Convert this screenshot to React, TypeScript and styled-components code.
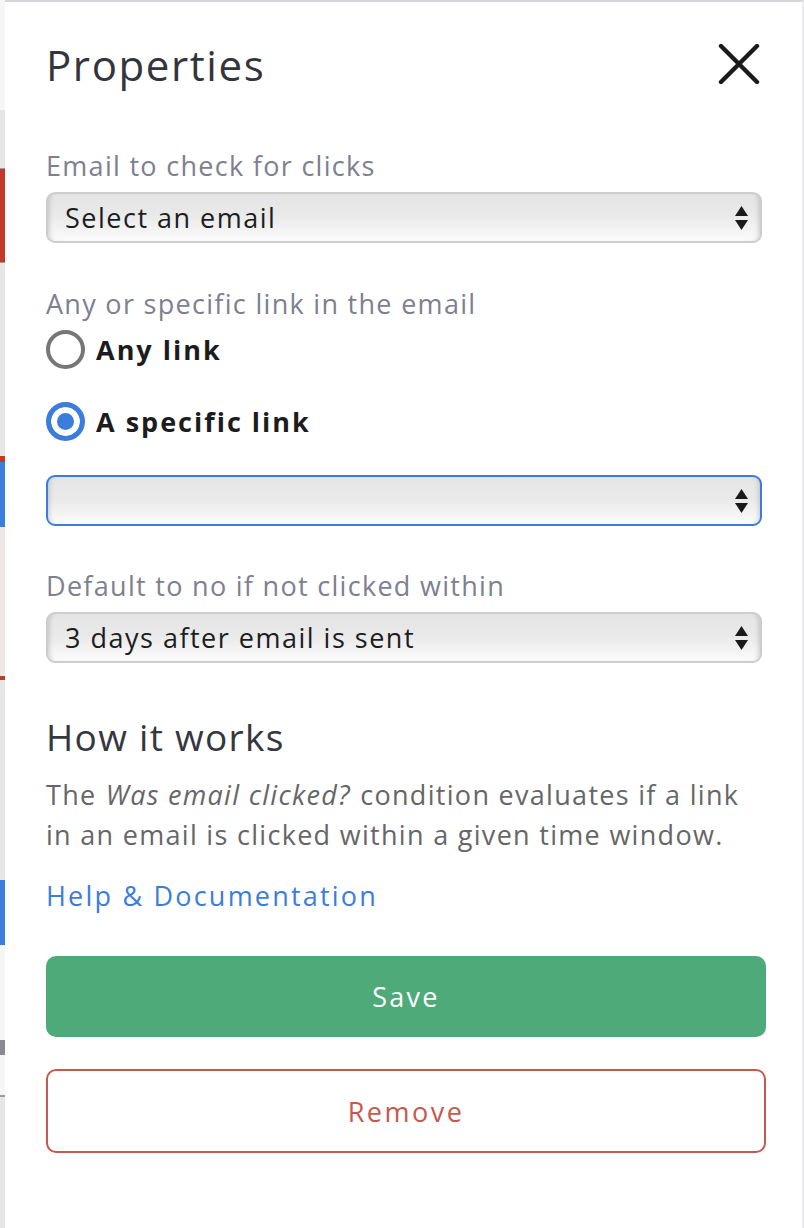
import React from 'react';
import { styled, createGlobalStyle } from 'styled-components';

const FONT = '"Open Sans", "Noto Sans", "Liberation Sans", sans-serif';

// the canvas that peeks out behind the panel on the left
const backdrop: { h: number; color: string }[] = [
  { h: 110, color: '#f6f6f8' },
  { h: 58, color: '#e6e6e9' },
  { h: 1, color: '#9c9c9c' },
  { h: 93, color: '#c0392b' },
  { h: 1, color: '#9c9c9c' },
  { h: 193, color: '#e6e6e9' },
  { h: 6, color: '#c0392b' },
  { h: 65, color: '#3b7ddd' },
  { h: 149, color: '#efe6e6' },
  { h: 4, color: '#c0392b' },
  { h: 200, color: '#e6e6e9' },
  { h: 65, color: '#3b7ddd' },
  { h: 95, color: '#f6f6f8' },
  { h: 15, color: '#8a8a90' },
  { h: 40, color: '#f6f6f8' },
  { h: 2, color: '#9c9c9c' },
  { h: 140, color: '#e6e6e9' },
];

const GlobalStyle = createGlobalStyle`
  * { box-sizing: border-box; }
  html, body { margin: 0; padding: 0; background: #ffffff; }
  body { font-family: ${FONT}; }
`;

export default function App() {
  return (
    <>
      <GlobalStyle />
      <Page>
        <Backdrop>
          {backdrop.map((b, i) => (
            <Strip key={i} style={{ height: b.h, background: b.color }} />
          ))}
        </Backdrop>
        <Panel>
          <Header>
            <Title>Properties</Title>
            <CloseButton aria-label="Close">
              <svg width="42" height="40" viewBox="0 0 42 40">
                <path d="M3 2 L39 38 M39 2 L3 38" stroke="#1b1b1d" strokeWidth="4.4" strokeLinecap="round" />
              </svg>
            </CloseButton>
          </Header>

          <Label top={54}>Email to check for clicks</Label>
          <SelectBox>
            <Select defaultValue="">
              <option value="">Select an email</option>
            </Select>
            <Arrows />
          </SelectBox>

          <Label top={43}>Any or specific link in the email</Label>
          <Radios>
            <RadioRow>
              <RadioInput type="radio" name="link" />
              <RadioText>Any link</RadioText>
            </RadioRow>
            <RadioRow>
              <RadioInput type="radio" name="link" defaultChecked />
              <RadioText>A specific link</RadioText>
            </RadioRow>
          </Radios>
          <SelectBox top={32}>
            <Select defaultValue="" focused>
              <option value=""></option>
            </Select>
            <Arrows />
          </SelectBox>

          <Label top={42}>Default to no if not clicked within</Label>
          <SelectBox>
            <Select defaultValue="3">
              <option value="3">3 days after email is sent</option>
            </Select>
            <Arrows />
          </SelectBox>

          <Heading>How it works</Heading>
          <Text>
            The <em>Was email clicked?</em> condition evaluates if a link in an email is clicked
            within a given time window.
          </Text>
          <HelpLink href="#">Help &amp; Documentation</HelpLink>

          <SaveButton>Save</SaveButton>
          <RemoveButton>Remove</RemoveButton>
        </Panel>
      </Page>
    </>
  );
}

function Arrows() {
  return (
    <ArrowIcon width="13" height="24" viewBox="0 0 13 24">
      <path d="M6.5 0 L13 10 L0 10 Z" fill="#1a1a1a" />
      <path d="M0 14 L13 14 L6.5 24 Z" fill="#1a1a1a" />
    </ArrowIcon>
  );
}

const Page = styled.div`
  display: flex;
  width: 804px;
  min-height: 1228px;
`;

const Backdrop = styled.div`
  width: 5px;
  display: flex;
  flex-direction: column;
`;

const Strip = styled.div`
  width: 100%;
`;

const Panel = styled.div`
  flex: 1;
  display: flex;
  flex-direction: column;
  padding: 32px 36px 0 41px;
  background: #ffffff;
  border-top: 2px solid #d6d6da;
  border-right: 2px solid #ececef;
`;

const Header = styled.div`
  display: flex;
  align-items: center;
  justify-content: space-between;
  height: 60px;
`;

const Title = styled.h1`
  margin: 0;
  font-size: 42px;
  font-weight: 500;
  letter-spacing: 1.6px;
  color: #33353d;
`;

const CloseButton = styled.button`
  display: flex;
  padding: 0;
  margin-right: 6px;
  border: none;
  background: none;
  cursor: pointer;
`;

const Label = styled.div<{ top: number }>`
  margin-top: ${p => p.top}px;
  font-size: 27px;
  line-height: 36px;
  letter-spacing: 1.3px;
  color: #7e8090;
`;

const SelectBox = styled.div<{ top?: number }>`
  position: relative;
  margin-top: ${p => p.top ?? 8}px;
  width: calc(100% - 4px);
`;

const Select = styled.select<{ focused?: boolean }>`
  appearance: none;
  display: block;
  width: 100%;
  height: 51px;
  padding: 0 44px 0 17px;
  font-family: ${FONT};
  font-size: 27px;
  letter-spacing: 1.5px;
  color: #1d1d1f;
  border: ${p => (p.focused ? '2px solid #3b7ddd' : '2px solid #cdcdcf')};
  border-radius: 9px;
  background: linear-gradient(to bottom, #e5e5e5 0%, #e9e9e9 45%, #fbfbfb 100%);
  box-shadow:
    inset 5px 0 5px -4px rgba(0, 0, 0, 0.18),
    inset -5px 0 5px -4px rgba(0, 0, 0, 0.18);
  outline: none;
`;

const ArrowIcon = styled.svg`
  position: absolute;
  right: 14px;
  top: 50%;
  transform: translateY(-50%);
  pointer-events: none;
`;

const Radios = styled.div`
  display: flex;
  flex-direction: column;
  gap: 28px;
  margin-top: 5px;
`;

const RadioRow = styled.label`
  display: flex;
  align-items: center;
  gap: 11px;
  height: 44px;
  cursor: pointer;
`;

const RadioInput = styled.input`
  appearance: none;
  margin: 0;
  width: 39px;
  height: 39px;
  border-radius: 50%;
  border: 4px solid #767676;
  background: #ffffff;

  &:checked {
    border: 5px solid #3b7ddd;
    background: #3b7ddd;
    box-shadow: inset 0 0 0 6px #ffffff;
  }
`;

const RadioText = styled.span`
  font-size: 27px;
  font-weight: 700;
  letter-spacing: 2px;
  color: #1c1c1e;
`;

const Heading = styled.h2`
  margin: 52px 0 0;
  font-size: 37px;
  line-height: 44px;
  font-weight: 500;
  letter-spacing: 1.3px;
  color: #35373f;
`;

const Text = styled.p`
  margin: 16px 0 0;
  font-size: 27px;
  line-height: 40px;
  letter-spacing: 1.3px;
  color: #666668;

  em {
    font-style: italic;
    padding: 0 1px;
  }
`;

const HelpLink = styled.a`
  margin-top: 23px;
  font-size: 27px;
  line-height: 36px;
  letter-spacing: 2.2px;
  color: #3b7ddd;
  text-decoration: none;
  align-self: flex-start;
`;

const SaveButton = styled.button`
  margin-top: 42px;
  height: 81px;
  border: none;
  border-radius: 10px;
  background: #4eab79;
  color: #ffffff;
  font-family: ${FONT};
  font-size: 27px;
  letter-spacing: 2.2px;
  cursor: pointer;
`;

const RemoveButton = styled.button`
  margin-top: 32px;
  height: 84px;
  border: 2px solid #c8574e;
  border-radius: 10px;
  background: #ffffff;
  color: #c8574e;
  font-family: ${FONT};
  font-size: 27px;
  letter-spacing: 2.5px;
  cursor: pointer;
`;
